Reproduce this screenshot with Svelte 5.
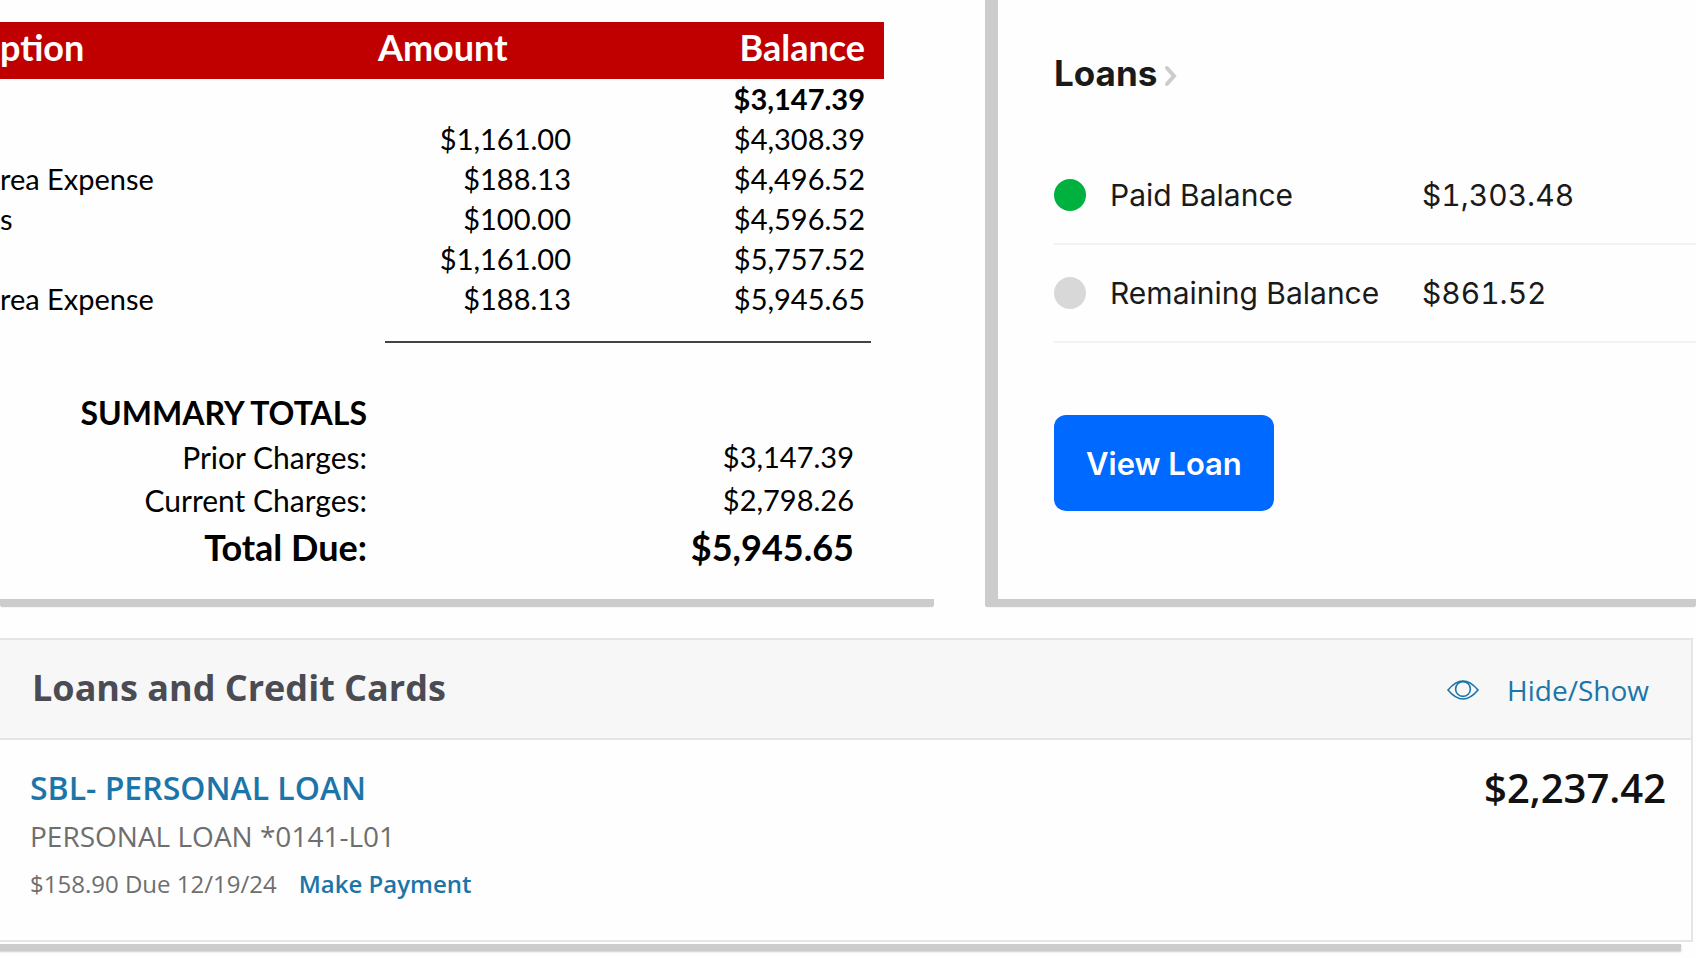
<script lang="ts">
	const charges = [
		{ description: '', amount: '', balance: '$3,147.39', opening: true },
		{ description: '', amount: '$1,161.00', balance: '$4,308.39' },
		{ description: 'rea Expense', amount: '$188.13', balance: '$4,496.52' },
		{ description: 's', amount: '$100.00', balance: '$4,596.52' },
		{ description: '', amount: '$1,161.00', balance: '$5,757.52' },
		{ description: 'rea Expense', amount: '$188.13', balance: '$5,945.65' }
	];

	const loanBalances = [
		{ label: 'Paid Balance', value: '$1,303.48', paid: true },
		{ label: 'Remaining Balance', value: '$861.52', paid: false }
	];

	let showAccounts = $state(true);
</script>

<main>
	<div class="top">
		<section class="statement">
			<table class="charges">
				<thead>
					<tr>
						<th class="description">ption</th>
						<th class="amount">Amount</th>
						<th class="balance">Balance</th>
					</tr>
				</thead>
				<tbody>
					{#each charges as row}
						<tr class:opening={row.opening}>
							<td>{row.description}</td>
							<td class="number">{row.amount}</td>
							<td class="number balance">{row.balance}</td>
						</tr>
					{/each}
				</tbody>
			</table>
			<hr />
			<table class="summary">
				<thead>
					<tr><th>SUMMARY TOTALS</th><td></td></tr>
				</thead>
				<tbody>
					<tr><th>Prior Charges:</th><td>$3,147.39</td></tr>
					<tr><th>Current Charges:</th><td>$2,798.26</td></tr>
					<tr class="total"><th>Total Due:</th><td>$5,945.65</td></tr>
				</tbody>
			</table>
		</section>

		<section class="loans">
			<h2>
				<a href="#loans">
					Loans
					<svg class="chevron" viewBox="0 0 14 22" aria-hidden="true">
						<path d="M3 3l7 8-7 8" />
					</svg>
				</a>
			</h2>
			<ul>
				{#each loanBalances as item}
					<li>
						<span class="dot" class:paid={item.paid}></span>
						<span>{item.label}</span>
						<span class="value">{item.value}</span>
					</li>
				{/each}
			</ul>
			<button type="button" class="view-loan">View Loan</button>
		</section>
	</div>

	<section class="accounts">
		<div class="panel">
			<header>
				<h2>Loans and Credit Cards</h2>
				<button type="button" class="toggle" onclick={() => (showAccounts = !showAccounts)}>
					<svg viewBox="0 0 32 20" aria-hidden="true">
						<path d="M1 10C6 4 11 1 16 1S26 4 31 10C26 16 21 19 16 19S6 16 1 10Z" />
						<circle cx="16" cy="9" r="7.4" />
					</svg>
					Hide/Show
				</button>
			</header>
			{#if showAccounts}
				<div class="account">
					<div>
						<a class="name" href="#account">SBL- PERSONAL LOAN</a>
						<p class="number-line">PERSONAL LOAN *0141-L01</p>
						<p class="due">
							<span>$158.90 Due 12/19/24</span>
							<a href="#payment">Make Payment</a>
						</p>
					</div>
					<strong>$2,237.42</strong>
				</div>
			{/if}
		</div>
		<div class="shadow"></div>
	</section>
</main>

<style>
	:global(body) {
		margin: 0;
		background: #fefefe;
	}

	main {
		overflow: hidden;
	}

	h2,
	p,
	ul {
		margin: 0;
		padding: 0;
	}

	a {
		text-decoration: none;
	}

	button {
		border: none;
		cursor: pointer;
	}

	.top {
		display: grid;
		grid-template-columns: minmax(0, 934fr) minmax(0, 711fr);
		gap: 51px;
	}

	.statement,
	.loans {
		border-bottom: 7px solid #ccc;
		box-shadow: 0 2px 1px -1px #ccc;
	}

	.statement {
		padding: 22px 50px 26px 0;
		color: #000;
		font-family: Lato, sans-serif;
		font-size: 29px;
	}

	table {
		width: 100%;
		border-collapse: collapse;
		table-layout: fixed;
	}

	th,
	td {
		padding: 0;
		line-height: 40px;
		white-space: nowrap;
	}

	.charges thead th {
		height: 57px;
		padding-bottom: 8px;
		box-sizing: border-box;
		background: #c00000;
		color: #fff;
		font-size: 36px;
		text-align: left;
	}

	.charges .description {
		width: 378px;
	}

	.charges .amount {
		width: 193px;
	}

	.charges .balance,
	.charges thead .balance {
		padding-right: 19px;
		text-align: right;
	}

	.number {
		text-align: right;
	}

	.opening {
		font-weight: 700;
	}

	hr {
		width: 55%;
		height: 2px;
		margin: 22px 13px 48px auto;
		border: none;
		background: #444;
	}

	.summary th {
		width: 367px;
		height: 43px;
		font-size: 30px;
		font-weight: 400;
		text-align: right;
	}

	.summary td {
		padding-right: 30px;
		text-align: right;
	}

	.summary thead th {
		height: 44px;
		font-size: 32px;
		font-weight: 700;
	}

	.summary .total th,
	.summary .total td {
		height: 52px;
		font-size: 36px;
		font-weight: 700;
	}

	.loans {
		padding: 51px 0 87px 56px;
		border-left: 13px solid #ccc;
		color: #1a1a1a;
		font-family: Inter, sans-serif;
		font-size: 30px;
	}

	.loans h2 {
		font-size: 35px;
		line-height: 44px;
	}

	.loans h2 a {
		display: inline-flex;
		align-items: center;
		gap: 7px;
		color: inherit;
	}

	.chevron {
		width: 14px;
		height: 22px;
		margin-top: 6px;
		fill: none;
		stroke: #ccc;
		stroke-width: 4;
		stroke-linecap: round;
	}

	ul {
		margin-top: 52px;
		list-style: none;
	}

	li {
		display: grid;
		grid-template-columns: 32px 288px 1fr;
		column-gap: 24px;
		align-items: center;
		height: 96px;
		border-bottom: 2px solid #f2f2f2;
	}

	.dot {
		width: 32px;
		height: 32px;
		border-radius: 50%;
		background: #d8d8d8;
	}

	.dot.paid {
		background: #00b140;
	}

	.value {
		font-variant-numeric: tabular-nums;
	}

	.view-loan {
		height: 96px;
		margin-top: 72px;
		padding: 0 32px;
		border-radius: 12px;
		background: #0069ff;
		color: #fff;
		font: 600 31px Inter, sans-serif;
	}

	.accounts {
		margin: 32px 3px 0 0;
		font-family: "Open Sans", sans-serif;
	}

	.panel {
		border: 2px solid #e5e5e5;
		border-left: none;
	}

	.accounts header {
		display: flex;
		align-items: center;
		justify-content: space-between;
		height: 100px;
		padding: 0 42px 4px 32px;
		box-sizing: border-box;
		border-bottom: 2px solid #e5e5e5;
		background: #f7f7f7;
	}

	.accounts h2 {
		color: #4b4b54;
		font-size: 36px;
	}

	.toggle {
		display: flex;
		align-items: center;
		gap: 28px;
		padding: 6px 0 0;
		background: none;
		color: #1c75a8;
		font: 28px "Open Sans", sans-serif;
	}

	.toggle svg {
		width: 32px;
		height: 20px;
		fill: none;
		stroke: currentColor;
		stroke-width: 1.6;
	}

	.account {
		display: flex;
		justify-content: space-between;
		padding: 24px 25px 32px 30px;
		color: #6e6e6e;
	}

	.account a {
		color: #1c75a8;
		font-weight: 600;
	}

	.account .name {
		display: block;
		font-size: 32px;
		line-height: 48px;
	}

	.number-line {
		font-size: 28px;
		line-height: 48px;
	}

	.due {
		display: flex;
		gap: 22px;
		font-size: 24px;
		line-height: 48px;
	}

	.account strong {
		color: #111;
		font-size: 40px;
		font-weight: 600;
		line-height: 48px;
	}

	.shadow {
		height: 7px;
		margin: 2px 12px 4px 0;
		box-shadow: 0 1px 2px #ccc;
		background: #ccc;
	}
</style>
